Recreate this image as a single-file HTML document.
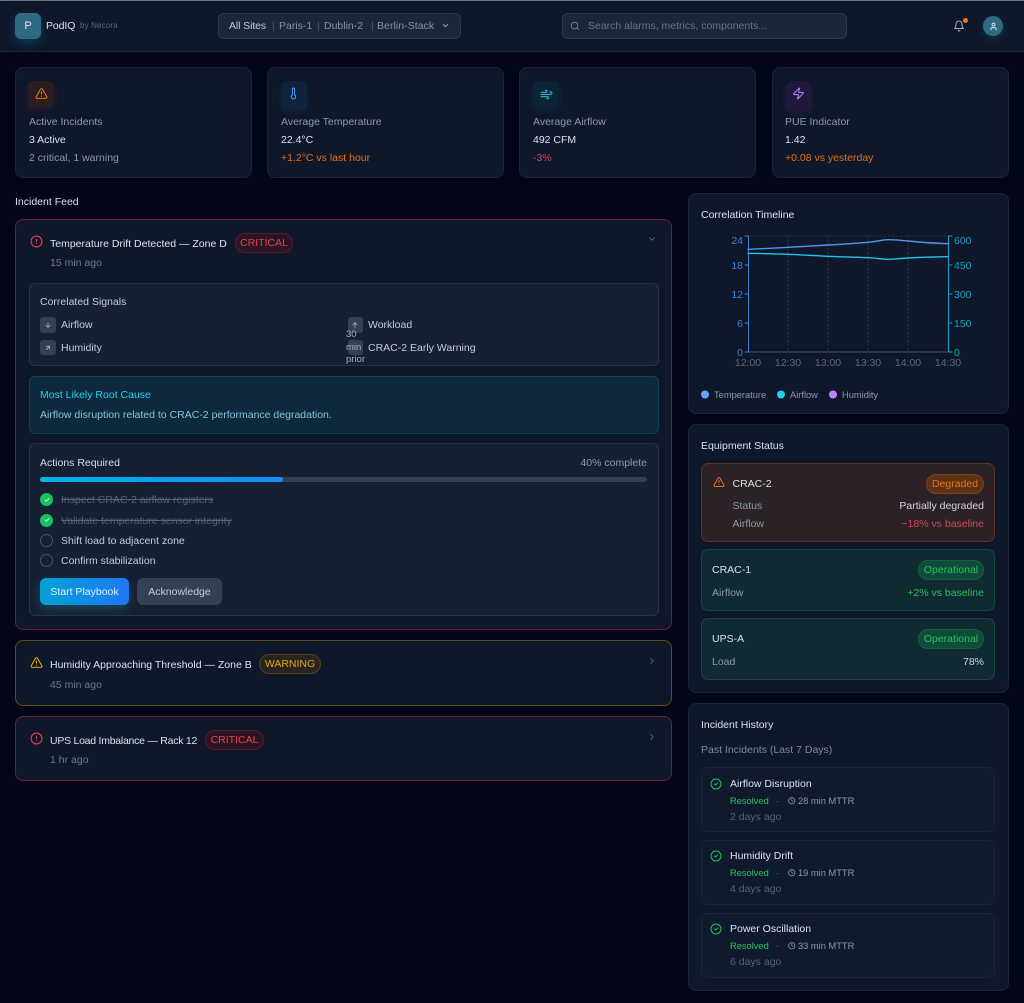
<!DOCTYPE html>
<html><head><meta charset="utf-8"><style>
*{box-sizing:border-box;margin:0;padding:0}
html,body{width:1024px;height:1003px;overflow:hidden;background:#020617}
#w{position:absolute;left:0;top:0;width:1024px;height:1003px;filter:blur(.3px);font-family:"Liberation Sans",sans-serif;font-size:10.5px;color:#dbe2ec;background:#020617;overflow:hidden}
.a{position:absolute}
.t{position:absolute;line-height:14px;white-space:nowrap}
.r{text-align:right}
.card{position:absolute;border-radius:8px;background:#0f172a;border:1px solid #1a2436}
.in{position:absolute;border-radius:6px;background:#162033;border:1px solid #273347}
svg{position:absolute;fill:none;stroke-linecap:round;stroke-linejoin:round;overflow:visible}
.d{color:#8c9ab0}.m{color:#64748b}.l{color:#c3ccd9}
.badge{position:absolute;border-radius:10px;text-align:center;line-height:18px;height:20px;white-space:nowrap}
.crit{background:#2c1424;border:1px solid #5a1d2c;color:#e5444a}
.warn{background:#29241f;border:1px solid #4f4418;color:#e0aa0a}
.op{background:#0f4a3a;border:1px solid #126040;color:#22c55e}
.sq{position:absolute;width:15.5px;height:15.5px;border-radius:3px;background:#334155}
.ic{position:absolute;width:26px;height:26px;border-radius:6px}
.it{position:absolute;left:701px;width:294px;height:65px;border-radius:7px;background:#0f1a2c;border:1px solid #1a2638}
</style></head><body><div id="w">
<div class="a" style="left:0;top:0;width:1024px;height:52px;background:#0f172a;border-bottom:1px solid #1e293b"></div>
<div class="a" style="left:0;top:0;width:1024px;height:1px;background:#6b7280"></div>

<div class="a" style="left:15px;top:13px;width:26px;height:26px;border-radius:6px;background:#2f6a83;box-shadow:0 4px 10px rgba(14,130,170,.35)"></div>
<div class="t" style="left:15px;width:26px;text-align:center;top:19px;font-size:11px;color:#d9e7ee">P</div>
<div class="t" style="left:46px;top:19px;font-size:10.5px;letter-spacing:-.1px">PodIQ</div>
<div class="t" style="left:80px;top:19px;font-size:8px;color:#5b6880;letter-spacing:.15px">by Necora</div>

<div class="a" style="left:218px;top:13px;width:243px;height:26px;border-radius:6px;background:#1a2738;border:1px solid #2a3a4e"></div>
<div class="t l" style="left:229px;top:19px;letter-spacing:-.1px">All Sites</div>
<div class="t" style="left:272px;top:19px;color:#475569">|</div>
<div class="t" style="left:279px;top:19px;color:#8492a6">Paris-1</div>
<div class="t" style="left:317px;top:19px;color:#475569">|</div>
<div class="t" style="left:324px;top:19px;color:#8492a6">Dublin-2</div>
<div class="t" style="left:371px;top:19px;color:#475569">|</div>
<div class="t" style="left:377px;top:19px;color:#8492a6;letter-spacing:.05px">Berlin-Stack</div>
<svg style="left:441px;top:21px" width="9" height="9" viewBox="0 0 24 24" stroke="#94a3b8" stroke-width="2.4"><path d="m6 9 6 6 6-6"/></svg>

<div class="a" style="left:562px;top:13px;width:285px;height:26px;border-radius:6px;background:#1a2738;border:1px solid #2a3a4e"></div>
<svg style="left:570px;top:21px" width="10" height="10" viewBox="0 0 24 24" stroke="#7b899c" stroke-width="2"><circle cx="11" cy="11" r="8"/><path d="m21 21-4.3-4.3"/></svg>
<div class="t m" style="left:588px;top:19px">Search alarms, metrics, components...</div>

<svg style="left:953px;top:20px" width="12" height="12" viewBox="0 0 24 24" stroke="#a3aebd" stroke-width="2"><path d="M6 8a6 6 0 0 1 12 0c0 7 3 9 3 9H3s3-2 3-9"/><path d="M10.3 21a1.94 1.94 0 0 0 3.4 0"/></svg>
<div class="a" style="left:963px;top:17.5px;width:5px;height:5px;border-radius:50%;background:#f97316"></div>
<div class="a" style="left:983px;top:16px;width:20px;height:20px;border-radius:50%;background:#2f6a83;box-shadow:0 3px 8px rgba(14,130,170,.3)"></div>
<svg style="left:988.5px;top:21.5px" width="9" height="9" viewBox="0 0 24 24" stroke="#dbe7ee" stroke-width="2.4"><path d="M19 21v-2a4 4 0 0 0-4-4H9a4 4 0 0 0-4 4v2"/><circle cx="12" cy="7" r="4"/></svg>

<!-- KPI -->
<div class="card" style="left:15px;top:67px;width:237px;height:111px"></div>
<div class="card" style="left:267px;top:67px;width:237px;height:111px"></div>
<div class="card" style="left:519px;top:67px;width:237px;height:111px"></div>
<div class="card" style="left:772px;top:67px;width:237px;height:111px"></div>

<div class="ic" style="left:28px;top:81px;background:#2a1e20;box-shadow:0 3px 8px rgba(249,115,22,.1)"></div>
<svg style="left:35px;top:87px" width="13" height="13" viewBox="0 0 24 24" stroke="#ea7210" stroke-width="2"><path d="m21.73 18-8-14a2 2 0 0 0-3.48 0l-8 14A2 2 0 0 0 4 21h16a2 2 0 0 0 1.73-3"/><path d="M12 9v4"/><path d="M12 17h.01"/></svg>
<div class="ic" style="left:281px;top:81px;height:30px;background:#0f233c;box-shadow:0 3px 8px rgba(59,130,246,.08)"></div>
<svg style="left:287px;top:87px" width="13" height="13" viewBox="0 0 24 24" stroke="#4f94ea" stroke-width="2"><path d="M14 4v10.54a4 4 0 1 1-4 0V4a2 2 0 0 1 4 0Z"/></svg>
<div class="ic" style="left:533px;top:81px;background:#0c2536;box-shadow:0 3px 8px rgba(6,182,212,.12)"></div>
<svg style="left:539.5px;top:87.5px" width="13" height="13" viewBox="0 0 24 24" stroke="#22b8dd" stroke-width="2"><path d="M17.7 7.7a2.5 2.5 0 1 1 1.8 4.3H2"/><path d="M9.6 4.6A2 2 0 1 1 11 8H2"/><path d="M12.6 19.4A2 2 0 1 0 14 16H2"/></svg>
<div class="ic" style="left:785px;top:81px;height:31px;width:26px;border-radius:8px;background:#1f1a3c;box-shadow:0 3px 8px rgba(168,85,247,.08)"></div>
<svg style="left:791.5px;top:87px" width="13" height="13" viewBox="0 0 24 24" stroke="#b07cf5" stroke-width="2"><path d="M4 14a1 1 0 0 1-.78-1.63l9.9-10.2a.5.5 0 0 1 .86.46l-1.92 6.02A1 1 0 0 0 13 10h7a1 1 0 0 1 .78 1.63l-9.9 10.2a.5.5 0 0 1-.86-.46l1.92-6.02A1 1 0 0 0 11 14z"/></svg>

<div class="t d" style="left:29px;top:115px">Active Incidents</div>
<div class="t" style="left:29px;top:133px">3 Active</div>
<div class="t d" style="left:29px;top:151px">2 critical, 1 warning</div>
<div class="t d" style="left:281px;top:115px">Average Temperature</div>
<div class="t" style="left:281px;top:133px">22.4°C</div>
<div class="t" style="left:281px;top:151px;color:#e8700f">+1.2°C vs last hour</div>
<div class="t d" style="left:533px;top:115px">Average Airflow</div>
<div class="t" style="left:533px;top:133px">492 CFM</div>
<div class="t" style="left:533px;top:151px;color:#d9434b">-3%</div>
<div class="t d" style="left:785px;top:115px">PUE Indicator</div>
<div class="t" style="left:785px;top:133px">1.42</div>
<div class="t" style="left:785px;top:151px;color:#e8700f">+0.08 vs yesterday</div>

<!-- Feed -->
<div class="t" style="left:15px;top:195px">Incident Feed</div>
<div class="card" style="left:15px;top:219px;width:657px;height:411px;border-color:#6b2035"></div>
<svg style="left:29.5px;top:234.5px" width="13" height="13" viewBox="0 0 24 24" stroke="#e5444a" stroke-width="2"><circle cx="12" cy="12" r="10"/><path d="M12 8v4"/><path d="M12 16h.01"/></svg>
<div class="t" style="left:50px;top:237px">Temperature Drift Detected — Zone D</div>
<div class="badge crit" style="left:235px;top:233px;width:58px">CRITICAL</div>
<div class="t" style="left:50px;top:256px;color:#6d7b8f">15 min ago</div>
<svg style="left:647px;top:234px" width="10" height="10" viewBox="0 0 24 24" stroke="#64748b" stroke-width="2"><path d="m6 9 6 6 6-6"/></svg>

<div class="in" style="left:29px;top:283px;width:630px;height:83px"></div>
<div class="t l" style="left:40px;top:295px">Correlated Signals</div>
<div class="sq" style="left:40px;top:317px"></div>
<svg style="left:44px;top:321px" width="8" height="8" viewBox="0 0 24 24" stroke="#a6b2c2" stroke-width="2.4"><path d="M12 5v14"/><path d="m19 12-7 7-7-7"/></svg>
<div class="t l" style="left:61px;top:318px">Airflow</div>
<div class="sq" style="left:40px;top:339.5px"></div>
<svg style="left:44px;top:343.5px" width="8" height="8" viewBox="0 0 24 24" stroke="#a6b2c2" stroke-width="2.4"><path d="M7 7h10v10"/><path d="M7 17 17 7"/></svg>
<div class="t l" style="left:61px;top:341px">Humidity</div>
<div class="sq" style="left:347.5px;top:317px"></div>
<svg style="left:351px;top:321px" width="8" height="8" viewBox="0 0 24 24" stroke="#a6b2c2" stroke-width="2.4"><path d="m5 12 7-7 7 7"/><path d="M12 19V5"/></svg>
<div class="t l" style="left:368px;top:318px">Workload</div>
<div class="sq" style="left:347.5px;top:339.5px"></div>
<div class="a" style="left:346px;top:329px;width:22px;font-size:9.5px;line-height:12.7px;color:#a6b2c2">30<br>min<br>prior</div>
<div class="t l" style="left:368px;top:341px">CRAC-2 Early Warning</div>

<div class="in" style="left:29px;top:376px;width:630px;height:57.5px;background:#0e283d;border-color:#10435a"></div>
<div class="t" style="left:40px;top:387.5px;color:#22d3ee">Most Likely Root Cause</div>
<div class="t" style="left:40px;top:407.5px;color:#84c6d8">Airflow disruption related to CRAC-2 performance degradation.</div>

<div class="in" style="left:29px;top:443px;width:630px;height:173px"></div>
<div class="t" style="left:40px;top:456px;color:#d5dde8">Actions Required</div>
<div class="t d r" style="left:547px;width:100px;top:456px">40% complete</div>
<div class="a" style="left:40px;top:477px;width:607px;height:5px;border-radius:3px;background:#334155"></div>
<div class="a" style="left:40px;top:477px;width:243px;height:5px;border-radius:3px;background:linear-gradient(90deg,#00b4e8,#1a8cff)"></div>

<div class="a" style="left:40px;top:493px;width:13px;height:13px;border-radius:50%;background:#16c15f"></div>
<svg style="left:43.5px;top:496.5px" width="6" height="6" viewBox="0 0 24 24" stroke="#fff" stroke-width="3.5"><path d="M20 6 9 17l-5-5"/></svg>
<div class="t" style="left:61px;top:492.5px;color:#566377;text-decoration:line-through">Inspect CRAC-2 airflow registers</div>
<div class="a" style="left:40px;top:513.5px;width:13px;height:13px;border-radius:50%;background:#16c15f"></div>
<svg style="left:43.5px;top:517px" width="6" height="6" viewBox="0 0 24 24" stroke="#fff" stroke-width="3.5"><path d="M20 6 9 17l-5-5"/></svg>
<div class="t" style="left:61px;top:514px;color:#566377;text-decoration:line-through">Validate temperature sensor integrity</div>
<div class="a" style="left:40px;top:533.5px;width:13px;height:13px;border-radius:50%;border:1.5px solid #475569"></div>
<div class="t l" style="left:61px;top:534px">Shift load to adjacent zone</div>
<div class="a" style="left:40px;top:554px;width:13px;height:13px;border-radius:50%;border:1.5px solid #475569"></div>
<div class="t l" style="left:61px;top:554px">Confirm stabilization</div>
<div class="a" style="left:40px;top:578px;width:89px;height:27px;border-radius:6px;background:linear-gradient(90deg,#06a0d4,#1d78f5);box-shadow:0 4px 10px rgba(6,182,212,.25)"></div>
<div class="t" style="left:40px;width:89px;text-align:center;top:585px;color:#dff2fb">Start Playbook</div>
<div class="a" style="left:137px;top:578px;width:85px;height:27px;border-radius:6px;background:#334155"></div>
<div class="t l" style="left:137px;width:85px;text-align:center;top:585px">Acknowledge</div>

<div class="card" style="left:15px;top:640px;width:657px;height:66px;border-color:#5c4d18"></div>
<svg style="left:29.5px;top:655.5px" width="13" height="13" viewBox="0 0 24 24" stroke="#e0aa0a" stroke-width="2"><path d="m21.73 18-8-14a2 2 0 0 0-3.48 0l-8 14A2 2 0 0 0 4 21h16a2 2 0 0 0 1.73-3"/><path d="M12 9v4"/><path d="M12 17h.01"/></svg>
<div class="t" style="left:50px;top:657.5px">Humidity Approaching Threshold — Zone B</div>
<div class="badge warn" style="left:259px;top:654px;width:62px">WARNING</div>
<div class="t" style="left:50px;top:678px;color:#6d7b8f">45 min ago</div>
<svg style="left:647px;top:656px" width="10" height="10" viewBox="0 0 24 24" stroke="#64748b" stroke-width="2"><path d="m9 18 6-6-6-6"/></svg>

<div class="card" style="left:15px;top:716px;width:657px;height:65px;border-color:#6b2035"></div>
<svg style="left:29.5px;top:731.5px" width="13" height="13" viewBox="0 0 24 24" stroke="#e5444a" stroke-width="2"><circle cx="12" cy="12" r="10"/><path d="M12 8v4"/><path d="M12 16h.01"/></svg>
<div class="t" style="left:50px;top:734px;letter-spacing:-.25px">UPS Load Imbalance — Rack 12</div>
<div class="badge crit" style="left:205px;top:730px;width:59px">CRITICAL</div>
<div class="t" style="left:50px;top:753px;color:#6d7b8f">1 hr ago</div>
<svg style="left:647px;top:732px" width="10" height="10" viewBox="0 0 24 24" stroke="#64748b" stroke-width="2"><path d="m9 18 6-6-6-6"/></svg>

<!-- Chart -->
<div class="card" style="left:688px;top:193px;width:321px;height:221px"></div>
<div class="t" style="left:701px;top:207.5px">Correlation Timeline</div>
<svg style="left:0;top:0" width="1024" height="1003" viewBox="0 0 1024 1003">
<g stroke="#2f3c50" stroke-width=".8" stroke-dasharray="2 2">
<path d="M748 236H948M788 236V352M828 236V352M868 236V352M908 236V352"/></g>
<path d="M748 352H948" stroke="#475569" stroke-width="1"/>
<g stroke="#3d84cf" stroke-width="1"><path d="M748.5 236V352M745 236H748.5M745 265H748.5M745 294H748.5M745 323H748.5M745 352H748.5"/></g>
<g stroke="#12a3c4" stroke-width="1"><path d="M948.5 236V352M948.5 236H952M948.5 265H952M948.5 294H952M948.5 323H952M948.5 352H952"/></g>
<path d="M748 249.3C762 248.8 775 248 788 247.3S815 245.7 828 245S855 243.3 868 242.3S880 239.7 888 239.7S900 240.2 908 241S935 243.3 948 243.7" stroke="#4f97f0" stroke-width="1.4"/>
<path d="M748 253.3C762 253.5 775 253.8 788 254.3S815 255.7 828 256.3S855 257 868 257.7S880 259.3 888 259.3S900 258.5 908 258S935 256.9 948 256.7" stroke="#22c6e6" stroke-width="1.4"/>
<g font-family="Liberation Sans" font-size="10.5" fill="#3f83cc" text-anchor="end" stroke="none">
<text x="743" y="244">24</text><text x="743" y="269">18</text><text x="743" y="298">12</text><text x="743" y="327">6</text><text x="743" y="356">0</text></g>
<g font-family="Liberation Sans" font-size="10.5" fill="#14a3c4" stroke="none">
<text x="954" y="244">600</text><text x="954" y="269">450</text><text x="954" y="298">300</text><text x="954" y="327">150</text><text x="954" y="356">0</text></g>
<g font-family="Liberation Sans" font-size="10.5" fill="#5c6a7e" text-anchor="middle" stroke="none">
<text x="748" y="366">12:00</text><text x="788" y="366">12:30</text><text x="828" y="366">13:00</text><text x="868" y="366">13:30</text><text x="908" y="366">14:00</text><text x="948" y="366">14:30</text></g>
<circle cx="705" cy="394.5" r="4" fill="#60a5fa" stroke="none"/><circle cx="781" cy="394.5" r="4" fill="#22d3ee" stroke="none"/><circle cx="833" cy="394.5" r="4" fill="#c084fc" stroke="none"/>
</svg>
<div class="t d" style="left:714px;top:387.5px;font-size:9.3px">Temperature</div>
<div class="t d" style="left:790px;top:387.5px;font-size:9.3px">Airflow</div>
<div class="t d" style="left:842px;top:387.5px;font-size:9.3px">Humidity</div>

<!-- Equipment -->
<div class="card" style="left:688px;top:424px;width:321px;height:269px"></div>
<div class="t" style="left:701px;top:438.5px">Equipment Status</div>
<div class="a" style="left:701px;top:463px;width:294px;height:78.5px;border-radius:7px;background:#2c2126;border:1px solid #5a3324"></div>
<svg style="left:712.5px;top:476px" width="12" height="12" viewBox="0 0 24 24" stroke="#ea7210" stroke-width="2"><path d="m21.73 18-8-14a2 2 0 0 0-3.48 0l-8 14A2 2 0 0 0 4 21h16a2 2 0 0 0 1.73-3"/><path d="M12 9v4"/><path d="M12 17h.01"/></svg>
<div class="t" style="left:732.5px;top:476.5px">CRAC-2</div>
<div class="badge" style="left:926px;top:474px;width:58px;background:#5b3218;border:1px solid #7d4218;color:#ea7210">Degraded</div>
<div class="t d" style="left:732.5px;top:498.5px">Status</div>
<div class="t r" style="right:40px;top:498.5px;color:#cdd5e0">Partially degraded</div>
<div class="t d" style="left:732.5px;top:516.5px">Airflow</div>
<div class="t r" style="right:40px;top:516.5px;color:#cf4a52">−18% vs baseline</div>

<div class="a" style="left:701px;top:549px;width:294px;height:61.5px;border-radius:7px;background:#0f2a31;border:1px solid #11493f"></div>
<div class="t" style="left:712px;top:563px">CRAC-1</div>
<div class="badge op" style="left:918px;top:560px;width:66px;height:19.5px">Operational</div>
<div class="t d" style="left:712px;top:586px">Airflow</div>
<div class="t r" style="right:40px;top:586px;color:#22c55e">+2% vs baseline</div>

<div class="a" style="left:701px;top:618px;width:294px;height:61.5px;border-radius:7px;background:#0f2a31;border:1px solid #11493f"></div>
<div class="t" style="left:712px;top:632px">UPS-A</div>
<div class="badge op" style="left:918px;top:629px;width:66px;height:19.5px">Operational</div>
<div class="t d" style="left:712px;top:655px">Load</div>
<div class="t r" style="right:40px;top:655px;color:#cdd5e0">78%</div>

<!-- History -->
<div class="card" style="left:688px;top:703px;width:321px;height:288px"></div>
<div class="t" style="left:701px;top:718px">Incident History</div>
<div class="t" style="left:701px;top:742.5px;color:#7c8aa0">Past Incidents (Last 7 Days)</div>

<div class="it" style="top:767px"></div>
<svg style="left:710px;top:777.5px" width="12" height="12" viewBox="0 0 24 24" stroke="#22c55e" stroke-width="2"><circle cx="12" cy="12" r="10"/><path d="m9 12 2 2 4-4"/></svg>
<div class="t" style="left:730px;top:776.5px">Airflow Disruption</div>
<div class="t" style="left:730px;top:793.5px;font-size:9.3px;color:#22c55e">Resolved</div>
<div class="t m" style="left:776px;top:793.5px;font-size:9.3px">·</div>
<svg style="left:787.5px;top:796.5px" width="7.5" height="7.5" viewBox="0 0 24 24" stroke="#94a3b8" stroke-width="2.4"><circle cx="12" cy="12" r="10"/><path d="M12 6v6l4 2"/></svg>
<div class="t d" style="left:798px;top:793.5px;font-size:9.3px">28 min MTTR</div>
<div class="t" style="left:730px;top:810px;color:#566377">2 days ago</div>

<div class="it" style="top:840px;height:64.5px"></div>
<svg style="left:710px;top:850px" width="12" height="12" viewBox="0 0 24 24" stroke="#22c55e" stroke-width="2"><circle cx="12" cy="12" r="10"/><path d="m9 12 2 2 4-4"/></svg>
<div class="t" style="left:730px;top:849px">Humidity Drift</div>
<div class="t" style="left:730px;top:866px;font-size:9.3px;color:#22c55e">Resolved</div>
<div class="t m" style="left:776px;top:866px;font-size:9.3px">·</div>
<svg style="left:787.5px;top:869px" width="7.5" height="7.5" viewBox="0 0 24 24" stroke="#94a3b8" stroke-width="2.4"><circle cx="12" cy="12" r="10"/><path d="M12 6v6l4 2"/></svg>
<div class="t d" style="left:798px;top:866px;font-size:9.3px">19 min MTTR</div>
<div class="t" style="left:730px;top:882px;color:#566377">4 days ago</div>

<div class="it" style="top:912.5px"></div>
<svg style="left:710px;top:923px" width="12" height="12" viewBox="0 0 24 24" stroke="#22c55e" stroke-width="2"><circle cx="12" cy="12" r="10"/><path d="m9 12 2 2 4-4"/></svg>
<div class="t" style="left:730px;top:921.5px">Power Oscillation</div>
<div class="t" style="left:730px;top:938.5px;font-size:9.3px;color:#22c55e">Resolved</div>
<div class="t m" style="left:776px;top:938.5px;font-size:9.3px">·</div>
<svg style="left:787.5px;top:941.5px" width="7.5" height="7.5" viewBox="0 0 24 24" stroke="#94a3b8" stroke-width="2.4"><circle cx="12" cy="12" r="10"/><path d="M12 6v6l4 2"/></svg>
<div class="t d" style="left:798px;top:938.5px;font-size:9.3px">33 min MTTR</div>
<div class="t" style="left:730px;top:955px;color:#566377">6 days ago</div>
</div></body></html>
